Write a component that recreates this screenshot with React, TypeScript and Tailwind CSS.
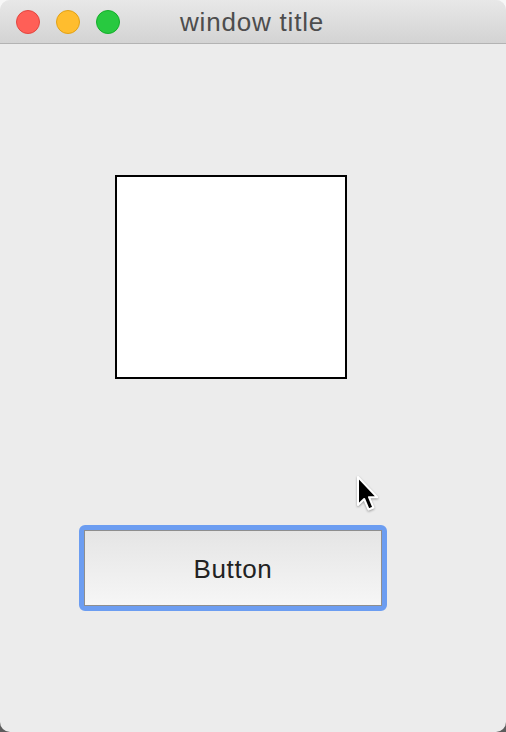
const font = 'font-["Liberation_Sans","Helvetica_Neue",Arial,sans-serif]';

function TrafficLight({ fill, edge }: { fill: string; edge: string }) {
    return (
        <span
            className="block h-6 w-6 rounded-full border"
            style={{ background: fill, borderColor: edge }}
        />
    );
}

function Cursor() {
    return (
        <svg
            className="absolute left-[354px] top-[473px] drop-shadow-[0_1px_1px_rgba(0,0,0,0.35)]"
            width="30"
            height="44"
            viewBox="0 0 30 44"
        >
            <path
                d="M4 4 L4 32 L10.2 26 L14.6 36.5 L19.4 34.5 L15 24.2 L23.2 24.2 Z"
                fill="#000"
                stroke="#fff"
                strokeWidth="2"
                strokeLinejoin="round"
            />
        </svg>
    );
}

export default function App() {
    return (
        <div className="h-[732px] w-[506px] bg-[linear-gradient(to_bottom,#f7f7f7_50%,#5c5c5c_50%)]">
            <div
                className={`relative flex h-full w-full flex-col overflow-hidden rounded-[10px] bg-[#ececec] ${font}`}
            >
                <div className="relative flex h-11 shrink-0 items-center border-b border-[#b3b3b3] bg-[linear-gradient(to_bottom,#e8e8e8,#d3d3d3)] pl-4">
                    <div className="flex gap-4">
                        <TrafficLight fill="#ff5f57" edge="#e2463f" />
                        <TrafficLight fill="#ffbd2e" edge="#e1a116" />
                        <TrafficLight fill="#28c940" edge="#14ae2a" />
                    </div>
                    <span className="absolute left-[180px] top-[6px] text-[26px] leading-[32px] tracking-[0.8px] text-[#4d4d4d]">
                        window title
                    </span>
                </div>

                <div className="ml-[115px] mt-[131px] h-[204px] w-[232px] border-2 border-black bg-white" />

                <div className="ml-[79px] mt-[146px] h-[86px] w-[308px] rounded-[6px] border-[5px] border-[#6c9df1]">
                    <div className="flex h-full w-full items-center justify-center border border-[#8e8e8e] bg-[linear-gradient(to_bottom,#e5e5e5,#f6f6f6)]">
                        <span className="mt-[3px] text-[26px] tracking-[0.6px] text-[#222]">
                            Button
                        </span>
                    </div>
                </div>

                <Cursor />
            </div>
        </div>
    );
}
